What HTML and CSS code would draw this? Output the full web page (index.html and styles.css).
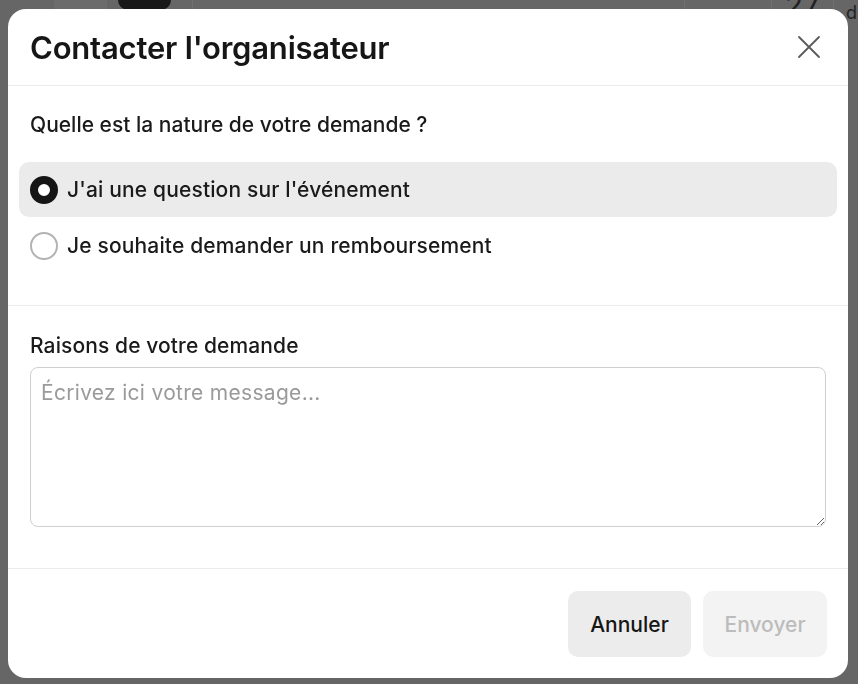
FILE: index.html
```html
<!DOCTYPE html>
<html lang="fr">
<head>
<meta charset="utf-8">
<title>Contacter l'organisateur</title>
<link rel="stylesheet" href="styles.css">
</head>
<body>
<div class="page">
  <div class="topbar">
    <div class="tb-gap1"></div>
    <div class="tb-pill"></div>
    <div class="tb-gap2"></div>
    <div class="tb-blob"></div>
    <div class="tb-gap3"></div>
    <div class="tb-main"></div>
    <div class="tb-cell"></div>
    <div class="tb-date">27</div>
    <div class="tb-end">d</div>
  </div>
</div>
<div class="overlay">
  <div class="modal">
    <div class="modal-header">
      <h1 class="modal-title">Contacter l'organisateur</h1>
      <button class="close-btn" aria-label="Fermer">
        <svg width="24" height="24" viewBox="0 0 24 24"><path d="M2 2 L22 22 M22 2 L2 22" stroke="#5a5a5a" stroke-width="1.8" fill="none" stroke-linecap="round"/></svg>
      </button>
    </div>
    <div class="section section-nature">
      <p class="question">Quelle est la nature de votre demande ?</p>
      <div class="options">
        <label class="option option-selected"><span class="radio radio-on"></span><span class="option-text">J'ai une question sur l'événement</span></label>
        <label class="option"><span class="radio"></span><span class="option-text">Je souhaite demander un remboursement</span></label>
      </div>
    </div>
    <div class="section section-reason">
      <p class="label">Raisons de votre demande</p>
      <textarea class="message" placeholder="Écrivez ici votre message..."></textarea>
    </div>
    <div class="modal-footer">
      <button class="btn btn-cancel">Annuler</button>
      <button class="btn btn-send" disabled>Envoyer</button>
    </div>
  </div>
</div>
</body>
</html>
```
FILE: styles.css
```css
html, body {
  margin: 0;
  padding: 0;
}
body {
  width: 858px;
  height: 684px;
  overflow: hidden;
  background: #666666;
  font-family: Inter, "Noto Sans", "Liberation Sans", sans-serif;
  color: #1a1a1a;
}
.page {
  height: 684px;
}
.topbar {
  display: flex;
  height: 30px;
  align-items: flex-start;
}
.tb-gap1 { width: 54px; }
.tb-pill {
  width: 53px;
  height: 30px;
  background: #6c6c6c;
  border-radius: 0 0 16px 16px;
}
.tb-gap2 { width: 11px; }
.tb-blob {
  width: 53px;
  height: 10px;
  background: #181818;
  border-radius: 0 0 18px 18px;
}
.tb-gap3 { width: 21px; border-right: 1px solid #707070; height: 30px; }
.tb-main { width: 491px; height: 30px; border-right: 1px solid #6f6f6f; }
.tb-cell { width: 86px; height: 30px; border-right: 1px solid #6f6f6f; }
.tb-date {
  width: 61px;
  height: 30px;
  border-right: 1px solid #6f6f6f;
  font-size: 30px;
  line-height: 10px;
  color: #222;
  text-align: center;
  overflow: hidden;
}
.tb-end {
  padding-left: 12px;
  font-size: 18px;
  line-height: 26px;
  color: #222;
}
.overlay {
  position: fixed;
  inset: 0;
  padding: 9px 10px 6px 8px;
  display: flex;
}
.modal {
  flex: 1;
  background: #ffffff;
  border-radius: 18px;
  display: flex;
  flex-direction: column;
  overflow: hidden;
}
.modal-header {
  height: 77px;
  border-bottom: 1px solid #ebebeb;
  display: flex;
  align-items: center;
  justify-content: space-between;
  padding: 0 27px 0 22px;
  box-sizing: border-box;
  flex-shrink: 0;
}
.modal-title {
  margin: 0;
  font-size: 31px;
  font-weight: 600;
  letter-spacing: -0.2px;
  color: #161616;
}
.close-btn {
  border: 0;
  background: none;
  padding: 0;
  width: 24px;
  height: 24px;
  display: flex;
  cursor: pointer;
}
.section {
  border-bottom: 1px solid #ebebeb;
  flex-shrink: 0;
}
.section-nature {
  padding: 27px 11px 31px;
  height: 220px;
  box-sizing: border-box;
}
.question {
  margin: 0 0 25px 11px;
  font-size: 21px;
  font-weight: 500;
  line-height: 24px;
}
.options {
  display: flex;
  flex-direction: column;
  gap: 1px;
}
.option {
  display: flex;
  align-items: center;
  gap: 9px;
  height: 55px;
  padding: 0 11px;
  border-radius: 10px;
  font-size: 21px;
  font-weight: 500;
  letter-spacing: 0.15px;
  cursor: pointer;
}
.option-selected {
  background: #ebebeb;
}
.radio {
  width: 28px;
  height: 28px;
  box-sizing: border-box;
  border-radius: 50%;
  border: 2px solid #b3b3b3;
  background: #fff;
  flex-shrink: 0;
}
.radio-on {
  border: 8px solid #161616;
}
.section-reason {
  padding: 28px 22px 41px;
  height: 263px;
  box-sizing: border-box;
  display: flex;
  flex-direction: column;
}
.label {
  margin: 0 0 9px;
  font-size: 21px;
  font-weight: 500;
  letter-spacing: 0.1px;
  line-height: 24px;
}
.message {
  height: 160px;
  box-sizing: border-box;
  border: 1px solid #cfcfcf;
  border-radius: 8px;
  padding: 12px 10px;
  font-family: inherit;
  font-size: 21px;
  letter-spacing: 0.3px;
  color: #1a1a1a;
  resize: vertical;
  outline: none;
}
.message::placeholder {
  color: #9a9a9a;
}
.modal-footer {
  flex: 1;
  display: flex;
  justify-content: flex-end;
  align-items: flex-start;
  gap: 12px;
  padding: 22px 21px 0;
}
.btn {
  height: 66px;
  border: 0;
  border-radius: 10px;
  font-family: inherit;
  font-size: 21px;
  font-weight: 500;
  padding: 0 20px;
}
.btn-cancel {
  background: #ececec;
  color: #161616;
  width: 123px;
}
.btn-send {
  background: #f3f3f3;
  color: #bcbcbc;
  width: 124px;
}
```
